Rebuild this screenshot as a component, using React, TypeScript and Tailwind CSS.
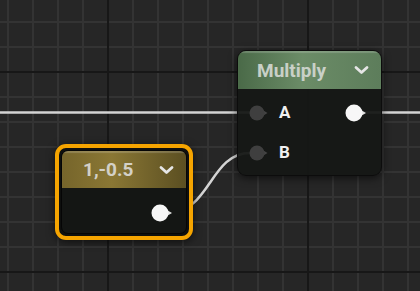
function Chevron() {
  return (
    <svg width="15" height="10" viewBox="0 0 15 10" className="shrink-0">
      <path d="M2 2.5 L7.5 7.5 L13 2.5" fill="none" stroke="#e6e6e6" strokeWidth="2.8" strokeLinecap="round" strokeLinejoin="round" />
    </svg>
  );
}

function Pin({ filled }: { filled?: boolean }) {
  return (
    <svg width="24" height="20" viewBox="0 0 24 20" className="shrink-0">
      <path d={filled ? "M15 6.5 L21 10 L15 13.5 Z" : "M13 6 L19.5 10 L13 14 Z"} fill={filled ? "#e2e2e2" : "#454545"} />
      <circle cx="9" cy="10" r={filled ? 8.5 : 7.5} fill={filled ? "#f7f7f7" : "#3f3f3f"} />
    </svg>
  );
}

function Grid() {
  const minor = Array.from({ length: 18 }).map((_, i) => 8 + i * 25);
  const minorY = Array.from({ length: 13 }).map((_, i) => 22 + i * 25 - 25);
  return (
    <svg className="absolute inset-0" width="420" height="291">
      <rect width="420" height="291" fill="#262626" />
      {minor.map((x) => (
        <rect key={"x" + x} x={x - 1} y="0" width="2" height="291" fill="#333333" />
      ))}
      {minorY.map((y) => (
        <rect key={"y" + y} x="0" y={y - 1} width="420" height="2" fill="#333333" />
      ))}
      <rect x="107" y="0" width="2" height="291" fill="#171717" />
      <rect x="307" y="0" width="2" height="291" fill="#171717" />
      <rect x="0" y="71" width="420" height="2" fill="#171717" />
      <rect x="0" y="271" width="420" height="2" fill="#171717" />
      <path d="M0 112.5 L250 112.5" stroke="#d4d4d4" strokeWidth="2.5" />
      <path d="M360 112.5 L420 112.5" stroke="#d4d4d4" strokeWidth="2.5" />
      <path d="M168 213 C210 213 210 153 250 153" fill="none" stroke="#d4d4d4" strokeWidth="2.5" />
    </svg>
  );
}

export default function App() {
  return (
    <div className="relative h-[291px] w-[420px] overflow-hidden bg-[#262626] font-['Roboto',sans-serif]">
      <Grid />

      <div className="absolute left-[237px] top-[50px] flex h-[126px] w-[145px] flex-col overflow-hidden rounded-[9px] border border-[#0c0c0c] bg-[#151715]/95 shadow-[0_2px_8px_rgba(0,0,0,0.6)]">
        <div className="flex h-[38px] items-center justify-between bg-[linear-gradient(90deg,#4a6a48_0%,#6b8c67_45%,#5d7d5b_100%)] pl-[19px] pr-[12px] shadow-[inset_0_2px_1px_rgba(255,255,255,0.18)]">
          <span className="text-[19px] font-bold leading-none text-[#c9d0c7]">Multiply</span>
          <Chevron />
        </div>
        <div className="flex flex-1 flex-col gap-[20px] pl-[10px] pr-[12px] pt-[14px]">
          <div className="flex h-[20px] items-center">
            <Pin />
            <span className="ml-[7px] text-[17px] font-bold text-[#f0f0f0]">A</span>
            <div className="flex-1" />
            <Pin filled />
          </div>
          <div className="flex h-[20px] items-center">
            <Pin />
            <span className="ml-[7px] text-[17px] font-bold text-[#f0f0f0]">B</span>
          </div>
        </div>
      </div>

      <div className="absolute left-[55px] top-[144px] h-[96px] w-[138px] rounded-[11px] border-[4px] border-[#f5a400] bg-[#0e0f0e] p-[2px] shadow-[0_2px_8px_rgba(0,0,0,0.6)]">
        <div className="flex h-full flex-col overflow-hidden rounded-[7px] border border-[#050505] bg-[#141614]">
          <div className="flex h-[37px] items-center justify-between bg-[linear-gradient(90deg,#76652b_0%,#8a7734_40%,#5b4f22_100%)] pl-[21px] pr-[12px] shadow-[inset_0_2px_1px_rgba(255,255,255,0.18)]">
            <span className="text-[19px] font-bold leading-none text-[#d3d0c6]">1,-0.5</span>
            <Chevron />
          </div>
          <div className="flex flex-1 items-center justify-end pr-[11px] pt-[4px]">
            <Pin filled />
          </div>
        </div>
      </div>
    </div>
  );
}
